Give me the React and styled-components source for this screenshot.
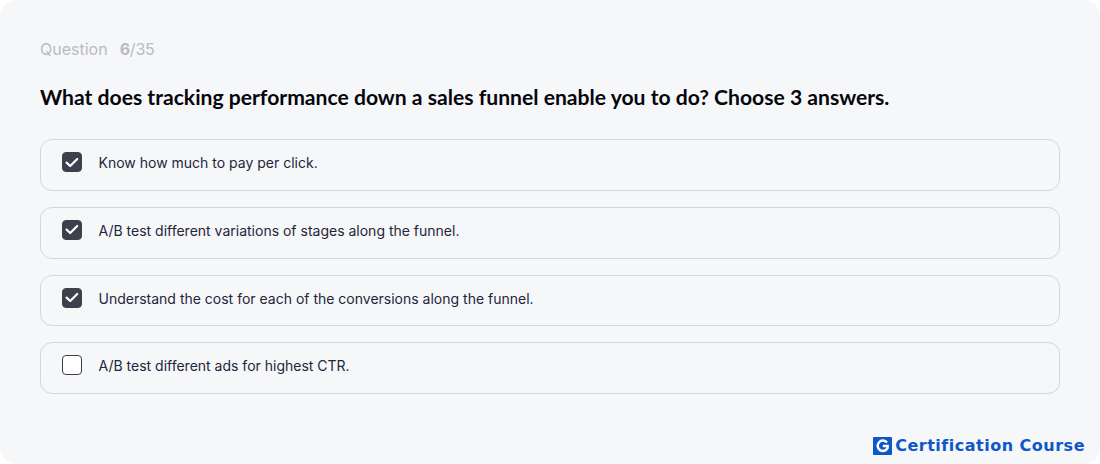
import React from "react";
import styled, { createGlobalStyle } from "styled-components";

const Global = createGlobalStyle`
  html, body { margin: 0; padding: 0; background: #fff; }
  #root { width: 1100px; height: 464px; overflow: hidden; }
`;

const Panel = styled.main`
  box-sizing: border-box;
  width: 1100px;
  height: 464px;
  padding: 39px 40px 0;
  background: #f6f7f9;
  border-radius: 16px;
  display: flex;
  flex-direction: column;
  font-family: Inter, "Liberation Sans", sans-serif;
`;

const Counter = styled.div`
  display: flex;
  gap: 12px;
  height: 20px;
  line-height: 20px;
  font-size: 16px;
  color: #b9bbc3;
`;

const Progress = styled.span`
  letter-spacing: -0.2px;
  b { font-weight: 700; }
`;

const Heading = styled.h1`
  margin: 18px 0 0;
  height: 40px;
  line-height: 40px;
  font-family: Lato, "Liberation Sans", sans-serif;
  font-size: 21.13px;
  font-weight: 700;
  color: #06060c;
  white-space: nowrap;
`;

const Answers = styled.ul`
  list-style: none;
  margin: 22px 0 0;
  padding: 0;
  display: flex;
  flex-direction: column;
  gap: 16px;
`;

const Answer = styled.li`
  box-sizing: border-box;
  height: 51.75px;
  padding: 12px 21px 0;
  display: flex;
  align-items: flex-start;
  gap: 16.5px;
  border: 1px solid #d4d5d9;
  border-radius: 12px;
  font-size: 14px;
  line-height: 22px;
  color: #23263b;
`;

const Box = styled.span`
  box-sizing: border-box;
  width: 20px;
  height: 20px;
  flex: none;
  display: flex;
  align-items: center;
  justify-content: center;
  border-radius: 4px;
  border: 1px solid #3e414d;
  background: ${(p) => (p.$checked ? "#3e414d" : "#fff")};
`;

const Brand = styled.div`
  margin-top: auto;
  margin-bottom: 9px;
  align-self: flex-end;
  margin-right: -25px;
  display: flex;
  align-items: center;
  gap: 3px;
  font-family: "DejaVu Sans", Inter, sans-serif;
  font-size: 16px;
  line-height: 18px;
  font-weight: 700;
  letter-spacing: 0.5px;
  color: #0f56c8;
`;

const answers = [
  ["Know how much to pay per click.", true],
  ["A/B test different variations of stages along the funnel.", true],
  ["Understand the cost for each of the conversions along the funnel.", true],
  ["A/B test different ads for highest CTR.", false],
];

const Check = () => (
  <svg width="14" height="11" viewBox="0 0 14 11" fill="none">
    <path d="M1.6 5.6 5.2 9 12.2 2" stroke="#fff" strokeWidth="2.2" strokeLinecap="round" strokeLinejoin="round" />
  </svg>
);

const Logo = () => (
  <svg width="19" height="18" viewBox="0 0 19 18">
    <rect width="19" height="18" rx="1" fill="#0f56c8" />
    <path d="M14 5.6A5.2 5.2 0 1 0 14.6 11V9.1H9.8" fill="none" stroke="#fff" strokeWidth="2.5" />
  </svg>
);

export default function App() {
  return (
    <>
      <Global />
      <Panel>
        <Counter>
          <span>Question</span>
          <Progress><b>6</b>/35</Progress>
        </Counter>
        <Heading>What does tracking performance down a sales funnel enable you to do? Choose 3 answers.</Heading>
        <Answers>
          {answers.map(([text, checked]) => (
            <Answer key={text}>
              <Box $checked={checked}>{checked && <Check />}</Box>
              {text}
            </Answer>
          ))}
        </Answers>
        <Brand><Logo />Certification Course</Brand>
      </Panel>
    </>
  );
}
